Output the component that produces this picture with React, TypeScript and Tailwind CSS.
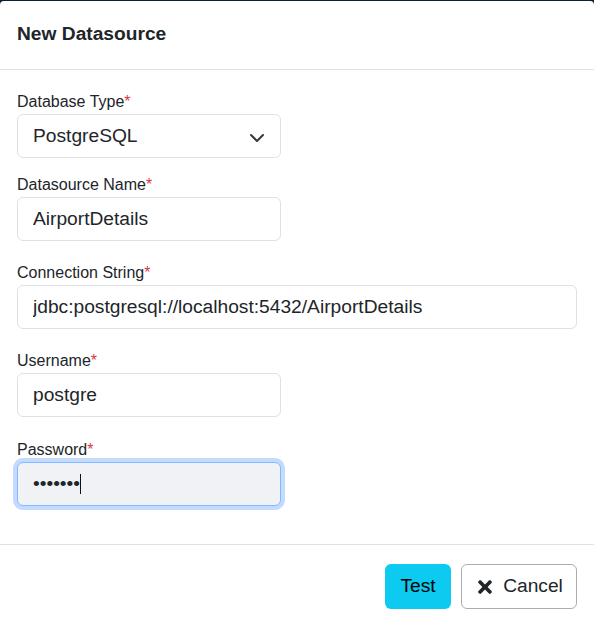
import { FaTimes } from 'react-icons/fa';

function Label({ text, className = '' }: { text: string; className?: string }) {
  return (
    <label className={`block text-[16px] leading-[24px] ${className}`}>
      {text}
      <span className="text-[#dc3545]">*</span>
    </label>
  );
}

function TextField({ value, wide = false }: { value: string; wide?: boolean }) {
  return (
    <input
      readOnly
      value={value}
      className={`block h-[44px] ${wide ? 'w-full' : 'w-[264px]'} rounded-[6px] border border-[#dee2e6] bg-white px-[15px] text-[19.2px] text-[#212529] outline-none`}
    />
  );
}

export default function App() {
  return (
    <div className="min-h-screen bg-[#0c1e3c] pt-px font-['Liberation_Sans',Arial,sans-serif] text-[#212529]">
      <div className="rounded-t-[4px] bg-white">
        {/* Header */}
        <div className="border-b border-[#dee2e6] px-[17px] pt-[21px] pb-[24px]">
          <h5 className="text-[19.2px] font-bold leading-[23px]">New Datasource</h5>
        </div>

        {/* Body */}
        <div className="px-[17px] pt-[20px] pb-[38px]">
          <Label text="Database Type" />
          <div className="flex h-[44px] w-[264px] items-center justify-between rounded-[6px] border border-[#dee2e6] bg-white pl-[15px] pr-[15px] text-[19.2px]">
            <span>PostgreSQL</span>
            <svg width="16" height="12" viewBox="0 0 16 12" fill="none">
              <path d="m2 5 6 6 6-6" stroke="#343a40" strokeWidth="2" strokeLinecap="round" strokeLinejoin="round" />
            </svg>
          </div>

          <Label text="Datasource Name" className="mt-[15px]" />
          <TextField value="AirportDetails" />

          <Label text="Connection String" className="mt-[20px]" />
          <TextField value="jdbc:postgresql://localhost:5432/AirportDetails" wide />

          <Label text="Username" className="mt-[20px]" />
          <TextField value="postgre" />

          <Label text="Password" className="mt-[21px]" />
          <div className="flex h-[44px] w-[264px] items-center rounded-[6px] border border-[#86b7fe] bg-[#f0f2f6] px-[15px] text-[19.2px] ring-4 ring-[#0d6efd]/25">
            <span>•••••••</span>
            <span className="h-[20px] w-px bg-[#111]" />
          </div>
        </div>

        {/* Footer */}
        <div className="flex justify-end gap-[10px] border-t border-[#dee2e6] px-[17px] pt-[19px] pb-[17px]">
          <button className="h-[45px] w-[66px] rounded-[6px] bg-[#0dcaf0] text-[19.2px] text-black">Test</button>
          <button className="flex h-[45px] w-[116px] items-center justify-center gap-[8px] rounded-[6px] border border-[#a9adb2] bg-white text-[19.2px] text-[#212529]">
            <FaTimes size={20} />
            Cancel
          </button>
        </div>
      </div>
    </div>
  );
}
